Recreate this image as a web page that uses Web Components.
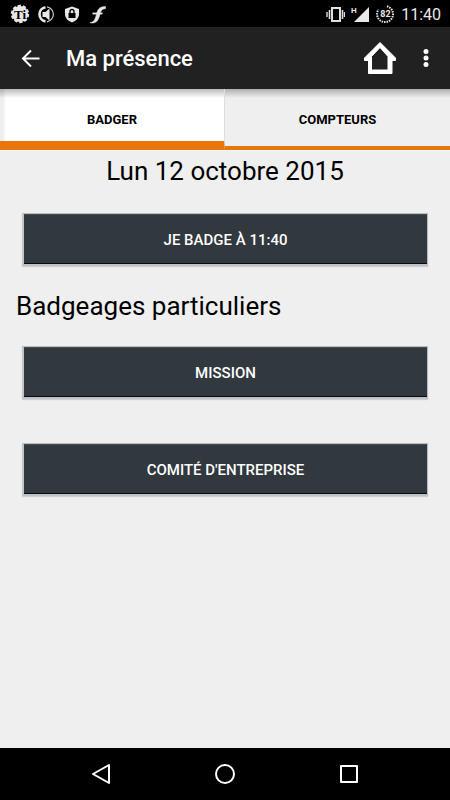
<!DOCTYPE html>
<html lang="fr">
<head>
<meta charset="utf-8">
<meta name="viewport" content="width=device-width, initial-scale=1">
<title>Ma présence</title>
<style>
html, body { margin: 0; }
body { font-family: Roboto, "Liberation Sans", sans-serif; color: #000; background: #efefef; }
</style>
</head>
<body>
<presence-app></presence-app>

<script>
function define(name, html) {
  const template = document.createElement('template');
  template.innerHTML = '<style>*{box-sizing:border-box} svg{display:block;flex:none}</style>' + html;
  customElements.define(name, class extends HTMLElement {
    constructor() {
      super();
      this.attachShadow({ mode: 'open' }).append(template.content.cloneNode(true));
    }
  });
}

define('status-bar', `
<style>
:host { display: flex; justify-content: space-between; align-items: center; height: 27px; padding: 0 9px 0 10px; background: #000; color: #e8e8e8; }
div { display: flex; align-items: center; }
.left { gap: 6px; }
.right { gap: 6px; }
time { font-size: 16px; line-height: 20px; padding-top: 2px; }
</style>
<div class="left">
  <svg width="20" height="20" viewBox="0 0 20 20" aria-hidden="true">
    <circle cx="10" cy="10" r="8" fill="#e8e8e8"/>
    <circle cx="10" cy="10" r="8" fill="none" stroke="#e8e8e8" stroke-width="2.400" stroke-dasharray="3.200 1.827"/>
    <text x="10" y="15" text-anchor="middle" font-family="Liberation Serif, serif" font-weight="700" font-size="13" fill="#000">Ti</text>
  </svg>
  <svg width="20" height="20" viewBox="0 0 20 20" aria-hidden="true">
    <path d="M9.500 3.200a7.200 7.200 0 0 0 0 14.200" fill="none" stroke="#e8e8e8" stroke-width="2.600"/>
    <path d="M11 2.800a7.600 7.600 0 0 1 0 15" fill="none" stroke="#ccc" stroke-width="1.200"/>
    <path d="M6.500 8h3L13.500 4.500v12L9.500 13h-3z" fill="#e8e8e8"/>
  </svg>
  <svg width="20" height="20" viewBox="0 0 20 20" aria-hidden="true">
    <path d="M10 2.500l7 2.500v5c0 4-3 7-7 8.500-4-1.500-7-4.500-7-8.500V5z" fill="#e8e8e8"/>
    <rect x="6.500" y="9" width="7" height="5" fill="#000"/>
    <path d="M8 9.500V7.500a2 2 0 0 1 4 0v2" fill="none" stroke="#000" stroke-width="1.300"/>
  </svg>
  <svg width="20" height="20" viewBox="0 0 20 20" aria-hidden="true">
    <path d="M2 18.500c2.500-.2 4.500-1 6-6.500C9.500 6 10.500 2.500 17.500 2.500v2.300c-4 0-4.500 2-6 7.200C10 17 8 19.500 2.500 19z" fill="#e8e8e8" stroke="#e8e8e8" stroke-width=".5"/>
    <path d="M4.500 9.500h10" stroke="#e8e8e8" stroke-width="1.800"/>
  </svg>
</div>
<div class="right">
  <svg width="20" height="20" viewBox="0 0 20 20" aria-hidden="true" fill="none" stroke="#e0e0e0">
    <rect x="7" y="4" width="8" height="13" stroke-width="2"/>
    <path d="M4.500 6v9M17.500 6v9" stroke-width="1.600"/><path d="M2 8v5M19.500 8v5" stroke-width="1.400"/>
  </svg>
  <svg width="18" height="20" viewBox="0 0 18 20" aria-hidden="true" fill="#e8e8e8">
    <path d="M18 3v15H3z"/><text x="0" y="9" font-size="8" font-weight="700">H</text>
  </svg>
  <svg width="20" height="20" viewBox="0 0 20 20" aria-hidden="true">
    <path d="M12 2.300a8 8 0 1 1-8.500 3.200" fill="none" stroke="#e8e8e8" stroke-width="2" stroke-dasharray="1.500 1"/>
    <text x="10.500" y="13" text-anchor="middle" font-size="9" font-weight="700" fill="#e8e8e8">82</text>
  </svg>
  <time>11:40</time>
</div>`);

define('app-bar', `
<style>
:host { display: flex; align-items: center; height: 62px; padding: 0 14px 0 18px; background: #212121; color: #fff; }
h1 { flex: 1; margin: 0; padding: 2px 0 0 22px; font-size: 22px; line-height: 28px; font-weight: 500; }
button { all: unset; display: block; cursor: pointer; }
.home { padding-right: 20px; }
</style>
<button aria-label="Retour"><svg width="26" height="26" viewBox="0 0 26 26" fill="none" stroke="#fff" stroke-width="2"><path d="M21.500 13.500H5.500M13 5.500l-8 8 8 8"/></svg></button>
<h1><slot></slot></h1>
<button class="home" aria-label="Accueil"><svg width="32" height="36" viewBox="0 0 32 36" fill="#fff" fill-rule="evenodd" stroke="#fff" stroke-linejoin="round"><path d="M16 2.500L31.500 18v2.500h-3.500v13H4.500v-13H.5V18zM16 7.500L7.500 16.500v13.500h16.500V16.500z"/></svg></button>
<button aria-label="Plus d'options"><svg width="20" height="24" viewBox="0 0 20 24" fill="#fff"><circle cx="10" cy="5.500" r="2.500"/><circle cx="10" cy="12" r="2.500"/><circle cx="10" cy="18.500" r="2.500"/></svg></button>`);

define('tab-strip', `
<style>
:host { display: flex; height: 61px; background: linear-gradient(#0004, #0000) top / 100% 9px no-repeat, #efefef; }
::slotted(*) { flex: 1; }
</style><slot></slot>`);

define('tab-item', `
<style>
:host { display: flex; }
button { all: unset; box-sizing: border-box; flex: 1; cursor: pointer; text-align: center; font-size: 13px; line-height: 16px; font-weight: 700; padding-top: 5px; border-bottom: 4px solid #e8760c; }
:host([active]) button { background: linear-gradient(#0004, #0000) top / 100% 9px no-repeat, linear-gradient(90deg, #efefef 3px, #fff 6px); border-bottom-width: 9px; padding-top: 10px; border-right: 1px solid #ddd; }
</style><button role="tab"><slot></slot></button>`);

define('action-button', `
<style>
:host { display: block; }
button { display: block; width: 100%; height: 53px; margin: 0; padding: 1px 0 0; border: 1px solid #b8bbbd; border-left: 2px solid #c2c4c5; border-bottom: 2px solid #c0c2c3; background: #31383e; box-shadow: inset 0 -1px #050a18, inset 0 1px #454c52, 0 1px 1px #0002; color: #fff; font: 500 15px/20px Roboto, "Liberation Sans", sans-serif; cursor: pointer; }
</style><button><slot></slot></button>`);

define('nav-bar', `
<style>
:host { display: flex; justify-content: center; align-items: center; gap: 100px; height: 52px; background: #000; }
button { all: unset; cursor: pointer; }
</style>
<button aria-label="Précédent"><svg width="24" height="24" viewBox="0 0 24 24" fill="none" stroke="#fff" stroke-width="2" stroke-linejoin="round"><path d="M20 3v18L4 12z"/></svg></button>
<button aria-label="Accueil"><svg width="24" height="24" viewBox="0 0 24 24" fill="none" stroke="#fff" stroke-width="2"><circle cx="12" cy="12" r="9"/></svg></button>
<button aria-label="Applications récentes"><svg width="24" height="24" viewBox="0 0 24 24" fill="none" stroke="#fff" stroke-width="2" stroke-linejoin="round"><rect x="4" y="4" width="16" height="16"/></svg></button>`);

define('presence-app', `
<style>
:host { display: flex; flex-direction: column; min-height: 100vh; }
main { flex: 1; display: flex; flex-direction: column; padding: 4px 16px 16px; border-top: 1px solid #f4fafc; }
h2 { margin: 0; font-size: 26px; line-height: 32px; font-weight: 400; }
.date { text-align: center; }
action-button { margin: 26px 6px 24px; }
.special { margin: 24px 6px 20px; }
</style>
<status-bar></status-bar>
<app-bar>Ma présence</app-bar>
<tab-strip role="tablist"><tab-item active>BADGER</tab-item><tab-item>COMPTEURS</tab-item></tab-strip>
<main>
  <h2 class="date">Lun 12 octobre 2015</h2>
  <action-button>JE BADGE À 11:40</action-button>
  <h2>Badgeages particuliers</h2>
  <action-button class="special">MISSION</action-button>
  <action-button class="special">COMITÉ D'ENTREPRISE</action-button>
</main>
<nav-bar></nav-bar>`);
</script>
</body>
</html>
